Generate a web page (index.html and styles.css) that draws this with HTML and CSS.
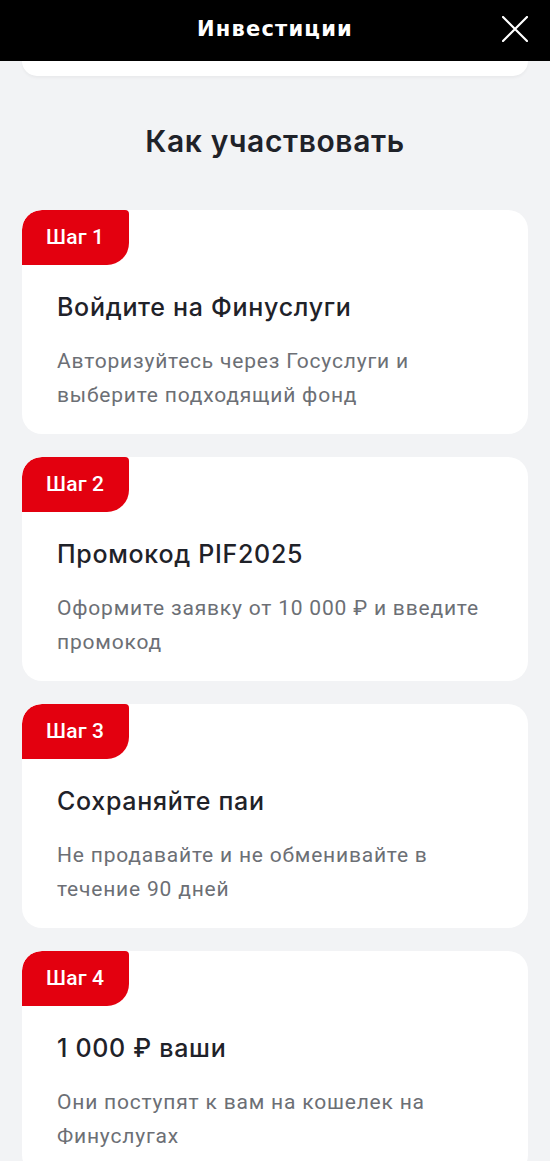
FILE: index.html
```html
<!DOCTYPE html>
<html lang="ru">
<head>
    <meta charset="UTF-8">
    <meta name="viewport" content="width=device-width, initial-scale=1.0">
    <title>Инвестиции</title>
    <link rel="stylesheet" href="styles.css">
</head>
<body>
    <header class="top-bar">
        <div class="top-title">Инвестиции</div>
        <button class="close-btn" aria-label="Закрыть">
            <svg width="26" height="26" viewBox="0 0 26 26">
                <path d="M1 1 L25 25 M25 1 L1 25" stroke="#fff" stroke-width="2.2" stroke-linecap="round" fill="none"/>
            </svg>
        </button>
    </header>

    <main class="content">
        <div class="prev-card"></div>

        <h1 class="section-title">Как участвовать</h1>

        <div class="steps">
            <div class="step-card">
                <div class="step-badge">Шаг 1</div>
                <h2 class="step-title">Войдите на Финуслуги</h2>
                <p class="step-text">Авторизуйтесь через Госуслуги и выберите подходящий фонд</p>
            </div>
            <div class="step-card">
                <div class="step-badge">Шаг 2</div>
                <h2 class="step-title">Промокод PIF2025</h2>
                <p class="step-text">Оформите заявку от 10&nbsp;000&nbsp;₽ и введите промокод</p>
            </div>
            <div class="step-card">
                <div class="step-badge">Шаг 3</div>
                <h2 class="step-title">Сохраняйте паи</h2>
                <p class="step-text">Не продавайте и не обменивайте в течение 90 дней</p>
            </div>
            <div class="step-card">
                <div class="step-badge">Шаг 4</div>
                <h2 class="step-title">1&nbsp;000&nbsp;₽ ваши</h2>
                <p class="step-text">Они поступят к вам на кошелек на Финуслугах</p>
            </div>
        </div>
    </main>
</body>
</html>
```

FILE: styles.css
```css
:root {
    --bg: #f2f3f5;
    --red: #e3000f;
    --dark: #1f2229;
    --grey: #6c6f75;
}

* {
    margin: 0;
    padding: 0;
    box-sizing: border-box;
}

body {
    font-family: Roboto, 'Noto Sans', sans-serif;
    background: var(--bg);
    overflow: hidden;
}

.top-bar {
    height: 61px;
    background: #000;
    display: flex;
    align-items: center;
    justify-content: center;
    position: relative;
}

.top-title {
    color: #fff;
    font-family: 'DejaVu Sans', sans-serif;
    font-weight: bold;
    font-size: 21px;
    letter-spacing: 1.2px;
    margin-top: -4px;
}

.close-btn {
    position: absolute;
    right: 22px;
    top: 16px;
    width: 26px;
    height: 26px;
    background: none;
    border: none;
    display: flex;
}

.content {
    padding: 0 22px;
}

.prev-card {
    height: 15px;
    background: #fff;
    border-radius: 0 0 20px 20px;
    box-shadow: 0 2px 3px rgba(0, 0, 0, 0.04);
}

.section-title {
    text-align: center;
    font-family: Inter, sans-serif;
    font-size: 30px;
    font-weight: 600;
    letter-spacing: 0.6px;
    color: var(--dark);
    line-height: 40px;
    margin: 45px 0 49px;
}

.steps {
    display: flex;
    flex-direction: column;
    gap: 23px;
}

.step-card {
    background: #fff;
    border-radius: 20px;
    height: 224px;
    overflow: hidden;
}

.step-badge {
    width: 107px;
    height: 55px;
    background: var(--red);
    color: #fff;
    font-size: 21px;
    font-weight: 500;
    letter-spacing: 0.2px;
    line-height: 55px;
    padding-left: 24px;
    border-radius: 20px 4px 22px 0;
}

.step-title {
    font-family: Inter, sans-serif;
    font-size: 25px;
    font-weight: 500;
    letter-spacing: 0.7px;
    color: var(--dark);
    line-height: 32px;
    margin: 26px 35px 0;
}

.step-text {
    font-size: 21px;
    letter-spacing: 0.8px;
    color: var(--grey);
    line-height: 34px;
    margin: 21px 35px 0;
}
```
